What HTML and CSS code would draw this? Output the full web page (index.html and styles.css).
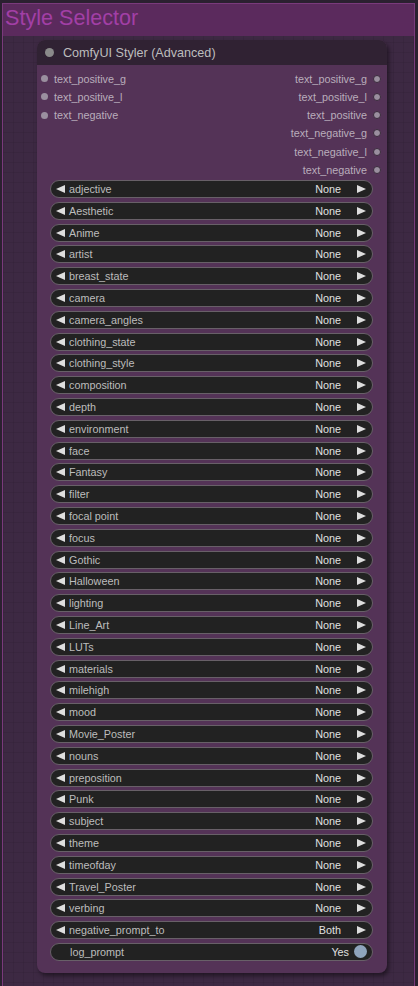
FILE: index.html
```html
<!DOCTYPE html>
<html>
<head>
<meta charset="utf-8">
<link rel="stylesheet" href="styles.css">
</head>
<body>
<div class="group">
  <div class="group-title">Style Selector</div>
  <div class="group-body">
    <div class="node">
      <div class="node-title"><span class="title-dot"></span><span>ComfyUI Styler (Advanced)</span></div>
      <div class="slots">
        <div class="inputs">
          <div class="slot in"><span class="dot"></span>text_positive_g</div>
          <div class="slot in"><span class="dot"></span>text_positive_l</div>
          <div class="slot in"><span class="dot"></span>text_negative</div>
        </div>
        <div class="outputs">
          <div class="slot out">text_positive_g<span class="dot o"></span></div>
          <div class="slot out">text_positive_l<span class="dot o"></span></div>
          <div class="slot out">text_positive<span class="dot o"></span></div>
          <div class="slot out">text_negative_g<span class="dot o"></span></div>
          <div class="slot out">text_negative_l<span class="dot o"></span></div>
          <div class="slot out">text_negative<span class="dot o"></span></div>
        </div>
      </div>
      <div class="widgets">
        <div class="w"><span class="la"></span><span class="lbl">adjective</span><span class="val">None</span><span class="ra"></span></div>
        <div class="w"><span class="la"></span><span class="lbl">Aesthetic</span><span class="val">None</span><span class="ra"></span></div>
        <div class="w"><span class="la"></span><span class="lbl">Anime</span><span class="val">None</span><span class="ra"></span></div>
        <div class="w"><span class="la"></span><span class="lbl">artist</span><span class="val">None</span><span class="ra"></span></div>
        <div class="w"><span class="la"></span><span class="lbl">breast_state</span><span class="val">None</span><span class="ra"></span></div>
        <div class="w"><span class="la"></span><span class="lbl">camera</span><span class="val">None</span><span class="ra"></span></div>
        <div class="w"><span class="la"></span><span class="lbl">camera_angles</span><span class="val">None</span><span class="ra"></span></div>
        <div class="w"><span class="la"></span><span class="lbl">clothing_state</span><span class="val">None</span><span class="ra"></span></div>
        <div class="w"><span class="la"></span><span class="lbl">clothing_style</span><span class="val">None</span><span class="ra"></span></div>
        <div class="w"><span class="la"></span><span class="lbl">composition</span><span class="val">None</span><span class="ra"></span></div>
        <div class="w"><span class="la"></span><span class="lbl">depth</span><span class="val">None</span><span class="ra"></span></div>
        <div class="w"><span class="la"></span><span class="lbl">environment</span><span class="val">None</span><span class="ra"></span></div>
        <div class="w"><span class="la"></span><span class="lbl">face</span><span class="val">None</span><span class="ra"></span></div>
        <div class="w"><span class="la"></span><span class="lbl">Fantasy</span><span class="val">None</span><span class="ra"></span></div>
        <div class="w"><span class="la"></span><span class="lbl">filter</span><span class="val">None</span><span class="ra"></span></div>
        <div class="w"><span class="la"></span><span class="lbl">focal point</span><span class="val">None</span><span class="ra"></span></div>
        <div class="w"><span class="la"></span><span class="lbl">focus</span><span class="val">None</span><span class="ra"></span></div>
        <div class="w"><span class="la"></span><span class="lbl">Gothic</span><span class="val">None</span><span class="ra"></span></div>
        <div class="w"><span class="la"></span><span class="lbl">Halloween</span><span class="val">None</span><span class="ra"></span></div>
        <div class="w"><span class="la"></span><span class="lbl">lighting</span><span class="val">None</span><span class="ra"></span></div>
        <div class="w"><span class="la"></span><span class="lbl">Line_Art</span><span class="val">None</span><span class="ra"></span></div>
        <div class="w"><span class="la"></span><span class="lbl">LUTs</span><span class="val">None</span><span class="ra"></span></div>
        <div class="w"><span class="la"></span><span class="lbl">materials</span><span class="val">None</span><span class="ra"></span></div>
        <div class="w"><span class="la"></span><span class="lbl">milehigh</span><span class="val">None</span><span class="ra"></span></div>
        <div class="w"><span class="la"></span><span class="lbl">mood</span><span class="val">None</span><span class="ra"></span></div>
        <div class="w"><span class="la"></span><span class="lbl">Movie_Poster</span><span class="val">None</span><span class="ra"></span></div>
        <div class="w"><span class="la"></span><span class="lbl">nouns</span><span class="val">None</span><span class="ra"></span></div>
        <div class="w"><span class="la"></span><span class="lbl">preposition</span><span class="val">None</span><span class="ra"></span></div>
        <div class="w"><span class="la"></span><span class="lbl">Punk</span><span class="val">None</span><span class="ra"></span></div>
        <div class="w"><span class="la"></span><span class="lbl">subject</span><span class="val">None</span><span class="ra"></span></div>
        <div class="w"><span class="la"></span><span class="lbl">theme</span><span class="val">None</span><span class="ra"></span></div>
        <div class="w"><span class="la"></span><span class="lbl">timeofday</span><span class="val">None</span><span class="ra"></span></div>
        <div class="w"><span class="la"></span><span class="lbl">Travel_Poster</span><span class="val">None</span><span class="ra"></span></div>
        <div class="w"><span class="la"></span><span class="lbl">verbing</span><span class="val">None</span><span class="ra"></span></div>
        <div class="w"><span class="la"></span><span class="lbl">negative_prompt_to</span><span class="val">Both</span><span class="ra"></span></div>
        <div class="w toggle"><span class="lbl">log_prompt</span><span class="val">Yes</span><span class="knob"></span></div>
      </div>
    </div>
  </div>
</div>
</body>
</html>
```
FILE: styles.css
```css
html, body {
  margin: 0;
  padding: 0;
}
body {
  width: 418px;
  height: 986px;
  overflow: hidden;
  background: #2b2030;
  font-family: "Liberation Sans", Arial, sans-serif;
  padding-top: 3px;
  box-sizing: border-box;
}
.group {
  margin-left: 2px;
  width: 413px;
  height: 990px;
  box-sizing: border-box;
  border: 1px solid #7a3a7c;
  border-bottom: none;
  background-color: #3d2943;
  background-image:
    repeating-linear-gradient(90deg, rgba(0,0,0,0.07) 0 1px, transparent 1px 10px),
    repeating-linear-gradient(0deg, rgba(0,0,0,0.07) 0 1px, transparent 1px 10px);
}
.group-title {
  height: 32px;
  background: #5b2a5d;
  color: #a23fa6;
  font-size: 21.6px;
  line-height: 28px;
  padding-left: 2px;
  box-sizing: border-box;
}
.group-body {
  padding-top: 4px;
  padding-left: 34px;
}
.node {
  width: 350px;
  height: 933px;
  background: #543357;
  border-radius: 8px;
  box-shadow: 2px 3px 4px rgba(0,0,0,0.45);
}
.node-title {
  height: 25px;
  background: #302233;
  border-radius: 8px 8px 0 0;
  display: flex;
  align-items: center;
  color: #bdbdbd;
  font-size: 12.6px;
  padding-left: 8px;
  gap: 9px;
}
.title-dot {
  width: 9px;
  height: 9px;
  border-radius: 50%;
  background: #8a8a8a;
}
.slots {
  display: flex;
  justify-content: space-between;
  padding-top: 4.5px;
  height: 115px;
  box-sizing: border-box;
}
.inputs, .outputs {
  display: flex;
  flex-direction: column;
}
.slot {
  height: 18.25px;
  display: flex;
  align-items: center;
  font-size: 10.8px;
  color: #b9adbb;
}
.slot.in {
  padding-left: 4px;
  gap: 6px;
}
.slot.out {
  justify-content: flex-end;
  padding-right: 6px;
  gap: 6px;
}
.dot {
  width: 7px;
  height: 7px;
  border-radius: 50%;
  background: #9a8f9f;
}
.dot.o {
  box-sizing: border-box;
  border: 1px solid #3a2a3c;
  width: 8px;
  height: 8px;
}
.widgets {
  display: flex;
  flex-direction: column;
  gap: 3.8px;
  padding: 0 14px 0 13px;
}
.w {
  height: 18px;
  box-sizing: border-box;
  border: 1px solid #686068;
  background: #222;
  border-radius: 9px;
  display: flex;
  align-items: center;
  font-size: 10.8px;
  padding-left: 5px;
  padding-right: 6px;
}
.la {
  width: 0;
  height: 0;
  border-top: 4.5px solid transparent;
  border-bottom: 4.5px solid transparent;
  border-right: 9px solid #dedede;
  margin-right: 4px;
}
.ra {
  width: 0;
  height: 0;
  border-top: 4.5px solid transparent;
  border-bottom: 4.5px solid transparent;
  border-left: 9px solid #dedede;
  margin-left: 16px;
}
.lbl {
  color: #bdbdbd;
  flex: 1;
}
.val {
  color: #e0e0e0;
}
.toggle {
  padding-left: 19px;
  padding-right: 5px;
}
.knob {
  width: 13px;
  height: 13px;
  border-radius: 50%;
  background: #8fa4bc;
  margin-left: 5px;
}
```
